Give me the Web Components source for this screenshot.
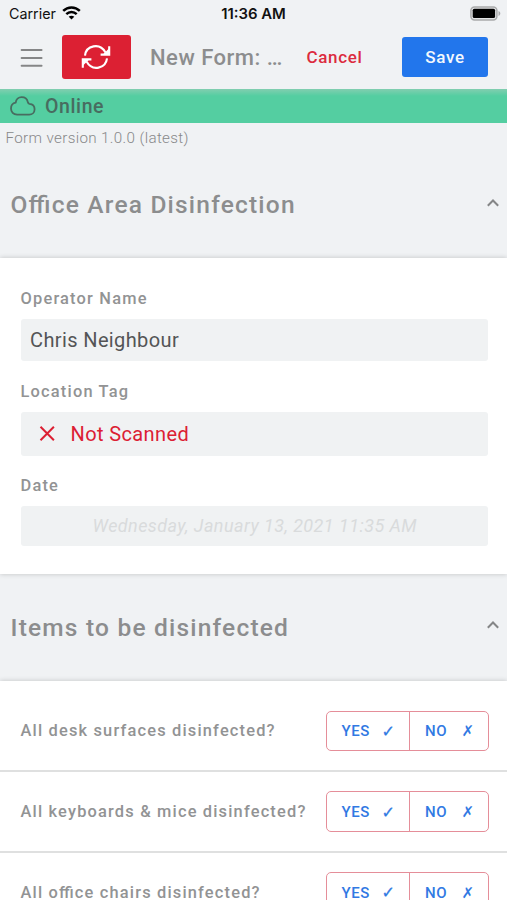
<!DOCTYPE html>
<html lang="en">
<head>
<meta charset="utf-8">
<title>New Form</title>
<style>
html,body{margin:0;height:900px;overflow:hidden;background:#f0f2f4}
body{font-family:Roboto,"Liberation Sans",sans-serif;color:#8c8d8e;font-feature-settings:"liga" 1}
</style>
</head>
<body>
<form-app></form-app>
<script>
function define(name, css, html) {
  const template = document.createElement('template');
  template.innerHTML = `<style>*{box-sizing:border-box}:host{box-sizing:border-box}${css}</style>${html}`;
  customElements.define(name, class extends HTMLElement {
    constructor() {
      super();
      this.attachShadow({mode: 'open'}).append(template.content.cloneNode(true));
    }
  });
}

define('status-bar', `
:host{display:grid;grid-template-columns:1fr auto 1fr;align-items:center;height:28px;padding:0 6px 0 9px;color:#111;font-family:Inter,sans-serif;font-size:15px;line-height:28px}
.left{display:flex;align-items:center;gap:6px;font-size:14.3px}
.time{font-weight:600;font-size:14.9px;margin-left:-3px}
.right{justify-self:end;display:flex}
svg{display:block;margin-top:-2px}
.right svg{margin-top:-1px}`, `
<div class="left"><span>Carrier</span>
<svg width="19" height="14" viewBox="0 0 19 14" fill="none" stroke="#000"><path d="M1.2 4.9C5.9.3 13.1.3 17.8 4.9" stroke-width="2.5"/><path d="M4.3 8.1c2.9-2.9 7.5-2.9 10.4 0" stroke-width="2.4"/><path d="M9.5 13.6 6.7 10.8c1.6-1.5 4-1.5 5.6 0z" fill="#000" stroke="none"/></svg></div>
<div class="time">11:36 AM</div>
<div class="right"><svg width="31" height="15" viewBox="0 0 31 15"><rect x=".9" y=".9" width="26" height="13" rx="3.6" fill="#e4e5e6" stroke="#a9aaab" stroke-width="1.5"/><rect x="2.7" y="2.7" width="22.4" height="9.4" rx="1.6"/><path d="M28.5 5.1c2.4.7 2.4 4.1 0 4.8z" fill="#a9aaab"/></svg></div>`);

define('nav-bar', `
:host{display:flex;align-items:center;height:61px;padding:0 19px 3px 20px;font-weight:500}
svg{display:block}
.sync{display:grid;place-items:center;width:69px;height:44px;margin-left:19px;border-radius:3px;background:#dc2033}
.sync svg{margin-left:-1px}
.title{margin-left:19px;width:156.5px;font-size:22px;letter-spacing:.5px;white-space:nowrap}
.cancel{width:95.5px;font-size:17px;letter-spacing:.65px;color:#dc2b3e}
.save{width:86px;height:40px;border-radius:3px;background:#2276ec;color:#f4f8fd;font-size:17px;letter-spacing:.7px;line-height:40px;text-align:center}
svg,.sync,.save,.title,.cancel{flex:none}`, `
<svg width="23" height="20" viewBox="0 0 23 20" stroke="#858687" stroke-width="1.9" stroke-linecap="round"><path d="M1.6 3h20M1.6 11h20M1.6 18.7h20"/></svg>
<div class="sync"><svg width="32" height="28" viewBox="0 0 32 28" fill="none" stroke="#fff" stroke-width="2.1"><path d="M5 12.6C6.1 2.6 19.6-.9 25.5 9.4M27 15.4C25.9 25.4 12.4 28.9 6.5 18.6"/><path d="M29.2 3.3v8.3h-8.6M2.8 24.7v-8.3h8.6"/><path d="M29.2 5.3v6.3h-6.4zM2.8 22.7v-6.3h6.4z" fill="#fff" stroke="none"/></svg></div>
<div class="title">New Form: …</div>
<div class="cancel">Cancel</div>
<div class="save">Save</div>`);

define('connection-banner', `
:host{display:flex;align-items:center;height:34px;padding-left:10px;gap:9px;background:linear-gradient(#82ceb0,#54cea1 7px);color:#486c60;font-weight:500;font-size:19.5px;letter-spacing:.6px}
svg{display:block}`, `
<svg width="26" height="20" viewBox="0 0 26 20" fill="none" stroke="#486c60" stroke-width="1.8" stroke-linejoin="round"><path d="M7.1 18.6C3.4 18.6 1 15.9 1 12.6c0-3 2-5.4 4.7-5.9C6 3.5 8.5 1.2 11.6 1.2c3.1 0 5.7 2 6.3 5.1.2.9.5 1.4 1.5 1.6 3.2.3 5.2 2.5 5.2 5.3 0 3.1-2.4 5.4-5.4 5.4z"/></svg>
<slot></slot>`);

define('section-header', `
:host{display:flex;align-items:center;justify-content:space-between;height:107px;padding:0 7px 0 10.5px;font-size:24.5px;font-weight:500;letter-spacing:1.2px;line-height:28px}
svg{display:block;margin-top:-5px}`, `
<slot></slot><svg width="14" height="10" viewBox="0 0 14 10" fill="none" stroke="#858687" stroke-width="2"><path d="M1.8 7.8 7 2.5l5.2 5.3"/></svg>`);

define('form-card', `
:host{display:block;background:#fff;box-shadow:0 0 5px rgba(0,0,0,.2)}`, `<slot></slot>`);

define('form-field', `
:host{display:block;margin:0 19.5px 0 20.5px}
.label{font-size:16.4px;font-weight:500;letter-spacing:1.2px;line-height:20px;color:#929394}
.value{display:flex;align-items:center;height:var(--box-height,42px);margin-top:10.5px;padding:0 9.5px;border-radius:3px;background:#f0f2f3;color:#545556;font-size:20px;letter-spacing:.38px}
:host([tag]) .label{padding-top:.6px;height:20px}
:host([tag]) .value{color:#dc2033;padding-left:18px}
:host([date]) .value{justify-content:center;color:#d9dbdc;font-style:italic;font-weight:400;font-size:18px;letter-spacing:.43px;padding:0 9px 1px 10.5px}`, `
<div class="label"><slot name="label"></slot></div><div class="value"><slot></slot></div>`);

define('cross-mark', `:host{display:block;margin-right:15px}svg{display:block}`, `
<svg width="17" height="17" viewBox="0 0 17 17" stroke="#dc2033" stroke-width="2"><path d="m1.5 1.8 13.4 13.4M14.9 1.8 1.5 15.2"/></svg>`);

define('yes-no-row', `
:host{display:flex;align-items:center;justify-content:space-between;height:80.7px;padding:0 18px 0 20.5px;border-bottom:2px solid #dfe0e0;font-size:16.4px;font-weight:500;letter-spacing:1.18px;color:#929394;white-space:nowrap}
.choice{display:flex;width:163px;height:40.5px;border:1.5px solid #e58e99;border-radius:5px;color:#3179e3;font-size:15px;letter-spacing:.6px}
.yes,.no{display:flex;align-items:center;justify-content:space-between}
.yes{width:83px;padding:1px 14px 0 14.5px;border-right:1px solid #e58e99}
.no{flex:1;padding:1px 14px 0 15px}
i{font:16px "DejaVu Sans",sans-serif;letter-spacing:0}
.yes i{-webkit-text-stroke:.3px}
.no i{font-size:15px}`, `
<slot></slot><div class="choice"><div class="yes">YES<i>✓</i></div><div class="no">NO<i>✗</i></div></div>`);

define('form-app', `
:host{display:block;height:900px;overflow:hidden}
.version{height:29px;padding-left:5.5px;font-size:15.2px;font-weight:300;letter-spacing:.35px;line-height:30px;color:#88898a}
.first{height:106px}
.fields{height:316px;padding-top:30.5px;display:flex;flex-direction:column;gap:20px}
.second{height:107px}
.rows{padding-top:10.6px}`, `
<status-bar></status-bar>
<nav-bar></nav-bar>
<connection-banner>Online</connection-banner>
<div class="version">Form version 1.0.0 (latest)</div>
<section-header class="first">Office Area Disinfection</section-header>
<form-card class="fields">
<form-field><span slot="label">Operator Name</span>Chris Neighbour</form-field>
<form-field tag style="--box-height:44px"><span slot="label">Location Tag</span><cross-mark></cross-mark>Not Scanned</form-field>
<form-field date style="--box-height:39.5px"><span slot="label">Date</span>Wednesday, January 13, 2021 11:35 AM</form-field>
</form-card>
<section-header class="second">Items to be disinfected</section-header>
<form-card class="rows">
<yes-no-row>All desk surfaces disinfected?</yes-no-row>
<yes-no-row>All keyboards &amp; mice disinfected?</yes-no-row>
<yes-no-row>All office chairs disinfected?</yes-no-row>
</form-card>`);
</script>
</body>
</html>
